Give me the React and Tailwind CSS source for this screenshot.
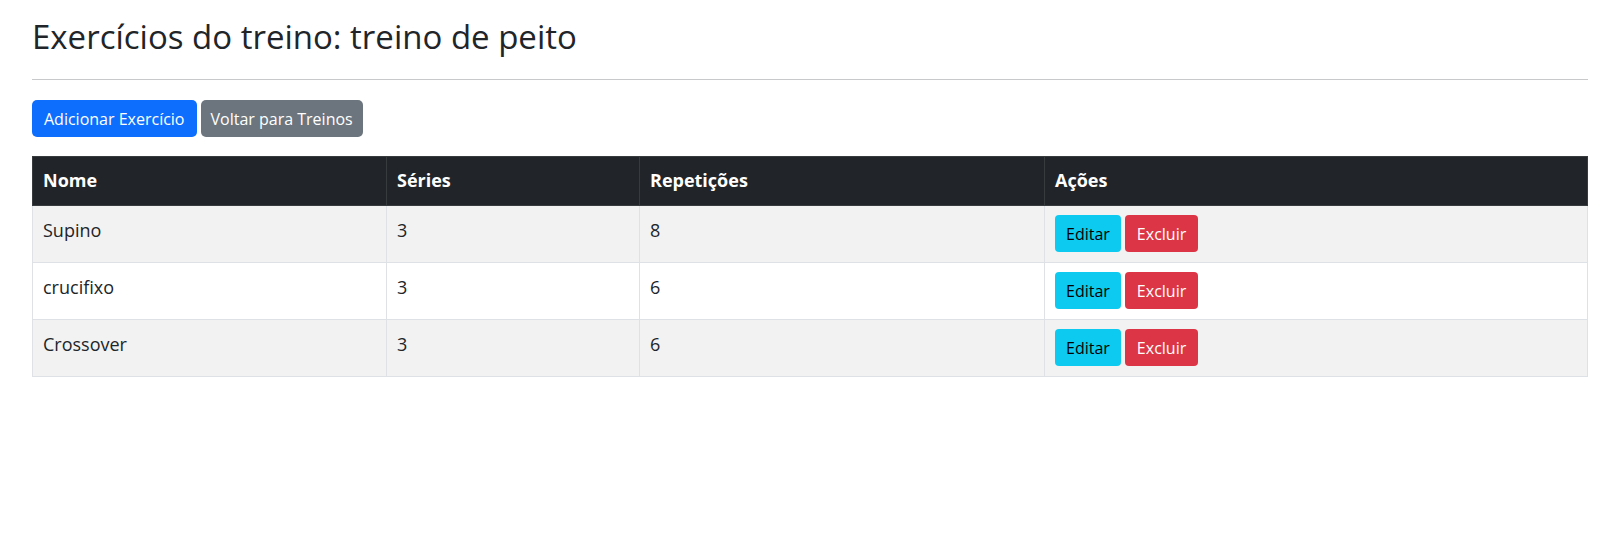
import React from "react";

const exercicios = [
  { id: 1, nome: "Supino", series: 3, repeticoes: 8 },
  { id: 2, nome: "crucifixo", series: 3, repeticoes: 6 },
  { id: 3, nome: "Crossover", series: 3, repeticoes: 6 },
];

const App = () => {
  return (
    <div
      className="min-h-[553px] bg-white pl-8 pr-[34px] text-[#212529]"
      style={{ fontFamily: "'Open Sans', 'Noto Sans', sans-serif" }}
    >
      <h2 className="pt-[18px] text-[33px] font-normal leading-[38px]">
        Exercícios do treino: treino de peito
      </h2>
      <hr className="mt-[23px] border-t border-[#c8c9ca]" />

      <div className="mt-[20px] flex gap-[4px]">
        <button className="h-[37px] rounded-[5px] bg-[#0d6efd] px-[12px] text-[16px] text-white">
          Adicionar Exercício
        </button>
        <button className="h-[37px] rounded-[5px] bg-[#6c757d] px-[10px] text-[16px] text-white">
          Voltar para Treinos
        </button>
      </div>

      <table className="mt-[19px] w-full border-collapse text-left text-[18px]">
        <thead>
          <tr className="bg-[#212529] text-white">
            <th className="h-[49px] w-[354px] border border-[#373b3e] px-[10px] py-[10px] align-top font-bold leading-[26px]">Nome</th>
            <th className="w-[253px] border border-[#373b3e] px-[10px] py-[10px] align-top font-bold leading-[26px]">Séries</th>
            <th className="w-[405px] border border-[#373b3e] px-[10px] py-[10px] align-top font-bold leading-[26px]">Repetições</th>
            <th className="border border-[#373b3e] px-[10px] py-[10px] align-top font-bold leading-[26px]">Ações</th>
          </tr>
        </thead>
        <tbody>
          {exercicios.map((ex, i) => (
            <tr key={ex.id} className={i % 2 === 0 ? "bg-[#f2f2f2]" : "bg-white"}>
              <td className="h-[57px] border border-[#dee2e6] px-[10px] pt-[11px] align-top leading-[26px]">
                {ex.nome}
              </td>
              <td className="border border-[#dee2e6] px-[10px] pt-[11px] align-top leading-[26px]">
                {ex.series}
              </td>
              <td className="border border-[#dee2e6] px-[10px] pt-[11px] align-top leading-[26px]">
                {ex.repeticoes}
              </td>
              <td className="border border-[#dee2e6] px-[10px] pt-[9px] align-top">
                <div className="flex gap-[4px]">
                  <button className="h-[37px] rounded-[4px] bg-[#0dcaf0] px-[11px] text-[16px] text-black">
                    Editar
                  </button>
                  <button className="h-[37px] rounded-[4px] bg-[#dc3545] px-[12px] text-[16px] text-white">
                    Excluir
                  </button>
                </div>
              </td>
            </tr>
          ))}
        </tbody>
      </table>
    </div>
  );
};

export default App;
